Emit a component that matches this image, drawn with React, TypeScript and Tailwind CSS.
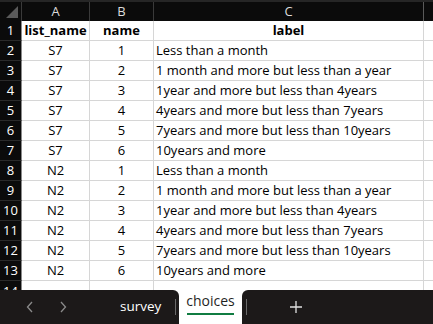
import React from "react";

const rows: [string, string, string][] = [
  ["S7", "1", "Less than a month"],
  ["S7", "2", "1 month and more but less than a year"],
  ["S7", "3", "1year and more but less than 4years"],
  ["S7", "4", "4years and more but less than 7years"],
  ["S7", "5", "7years and more but less than 10years"],
  ["S7", "6", "10years and more"],
  ["N2", "1", "Less than a month"],
  ["N2", "2", "1 month and more but less than a year"],
  ["N2", "3", "1year and more but less than 4years"],
  ["N2", "4", "4years and more but less than 7years"],
  ["N2", "5", "7years and more but less than 10years"],
  ["N2", "6", "10years and more"],
];

const font = { fontFamily: '"Open Sans", "Noto Sans", sans-serif' };

function Row({ n, a, b, c, bold }: { n: string; a: string; b: string; c: string; bold?: boolean }) {
  return (
    <div className="flex h-[20px]">
      <div className="w-[22px] shrink-0 bg-[#0b0b0b] text-white text-[13px] flex items-center justify-center border-b border-[#2a2a2a] border-r border-r-[#8a8a8a]">
        {n}
      </div>
      <div className={`w-[68px] shrink-0 border-b border-r border-[#d6d6d6] flex items-center justify-center text-[13px] text-black ${bold ? "font-bold" : ""}`}>
        {a}
      </div>
      <div className={`w-[64px] shrink-0 border-b border-r border-[#d6d6d6] flex items-center justify-center text-[13px] text-black ${bold ? "font-bold" : ""}`}>
        {b}
      </div>
      <div className={`w-[270px] shrink-0 border-b border-r border-[#d6d6d6] flex items-center text-[13px] text-black ${bold ? "font-bold justify-center" : "pl-[2px]"}`}>
        {c}
      </div>
      <div className="flex-1 border-b border-[#d6d6d6]" />
    </div>
  );
}

export default function App() {
  return (
    <div className="w-[433px] h-[324px] bg-white overflow-hidden flex flex-col" style={font}>
      <div className="h-[2px] bg-[#262626]" />
      <div className="flex h-[19px] bg-[#0b0b0b] text-[#dcdcdc] text-[13px]">
        <div className="w-[22px] shrink-0 border-r border-[#3a3a3a]">
          <svg width="22" height="19" className="block">
            <polygon points="18,4 18,16 6,16" fill="#5a5a5a" />
          </svg>
        </div>
        <div className="w-[68px] shrink-0 border-r border-[#3a3a3a] flex items-center justify-center">A</div>
        <div className="w-[64px] shrink-0 border-r border-[#3a3a3a] flex items-center justify-center">B</div>
        <div className="w-[270px] shrink-0 border-r border-[#5a5a5a] flex items-center justify-center">C</div>
        <div className="flex-1" />
      </div>
      <Row n="1" a="list_name" b="name" c="label" bold />
      {rows.map((r, i) => (
        <Row key={i} n={String(i + 2)} a={r[0]} b={r[1]} c={r[2]} />
      ))}
      <div className="flex h-[9px] overflow-hidden">
        <div className="w-[22px] shrink-0 bg-[#0b0b0b] text-white text-[13px] leading-[20px] text-center border-r border-[#8a8a8a]">14</div>
        <div className="w-[68px] shrink-0 border-r border-[#d6d6d6]" />
        <div className="w-[64px] shrink-0 border-r border-[#d6d6d6]" />
        <div className="w-[270px] shrink-0 border-r border-[#d6d6d6]" />
        <div className="flex-1" />
      </div>
      <div className="flex flex-1 bg-white">
        <div className="w-[179px] bg-[#1c1919] rounded-tr-[6px] flex items-center text-[#d8d8d8]">
          <div className="w-[22px] ml-[19px] flex justify-center">
            <svg width="10" height="14" viewBox="0 0 10 14"><path d="M7 2 L2.5 7 L7 12" stroke="#8a8a8a" strokeWidth="1.3" fill="none" /></svg>
          </div>
          <div className="w-[22px] ml-[11px] flex justify-center">
            <svg width="10" height="14" viewBox="0 0 10 14"><path d="M3 2 L7.5 7 L3 12" stroke="#8a8a8a" strokeWidth="1.3" fill="none" /></svg>
          </div>
          <div className="ml-[46px] w-[55px] text-[13.5px] text-white pb-[2px]">survey</div>
          <div className="w-px h-[16px] bg-[#6a6a6a]" />
        </div>
        <div className="w-[63px] h-[29px] bg-white rounded-b-[5px] flex flex-col items-center pt-[2px]">
          <div className="text-[14px] text-[#1f1f1f] leading-[18px]">choices</div>
          <div className="mt-[3px] h-[2px] w-[47px] bg-[#107c41]" />
        </div>
        <div className="flex-1 bg-[#1c1919] rounded-tl-[6px] flex items-center">
          <div className="ml-[4px] w-px h-[16px] bg-[#6a6a6a]" />
          <div className="ml-[42px]">
            <svg width="14" height="14" viewBox="0 0 14 14"><path d="M7 1 V13 M1 7 H13" stroke="#e0e0e0" strokeWidth="1.3" /></svg>
          </div>
        </div>
      </div>
    </div>
  );
}
